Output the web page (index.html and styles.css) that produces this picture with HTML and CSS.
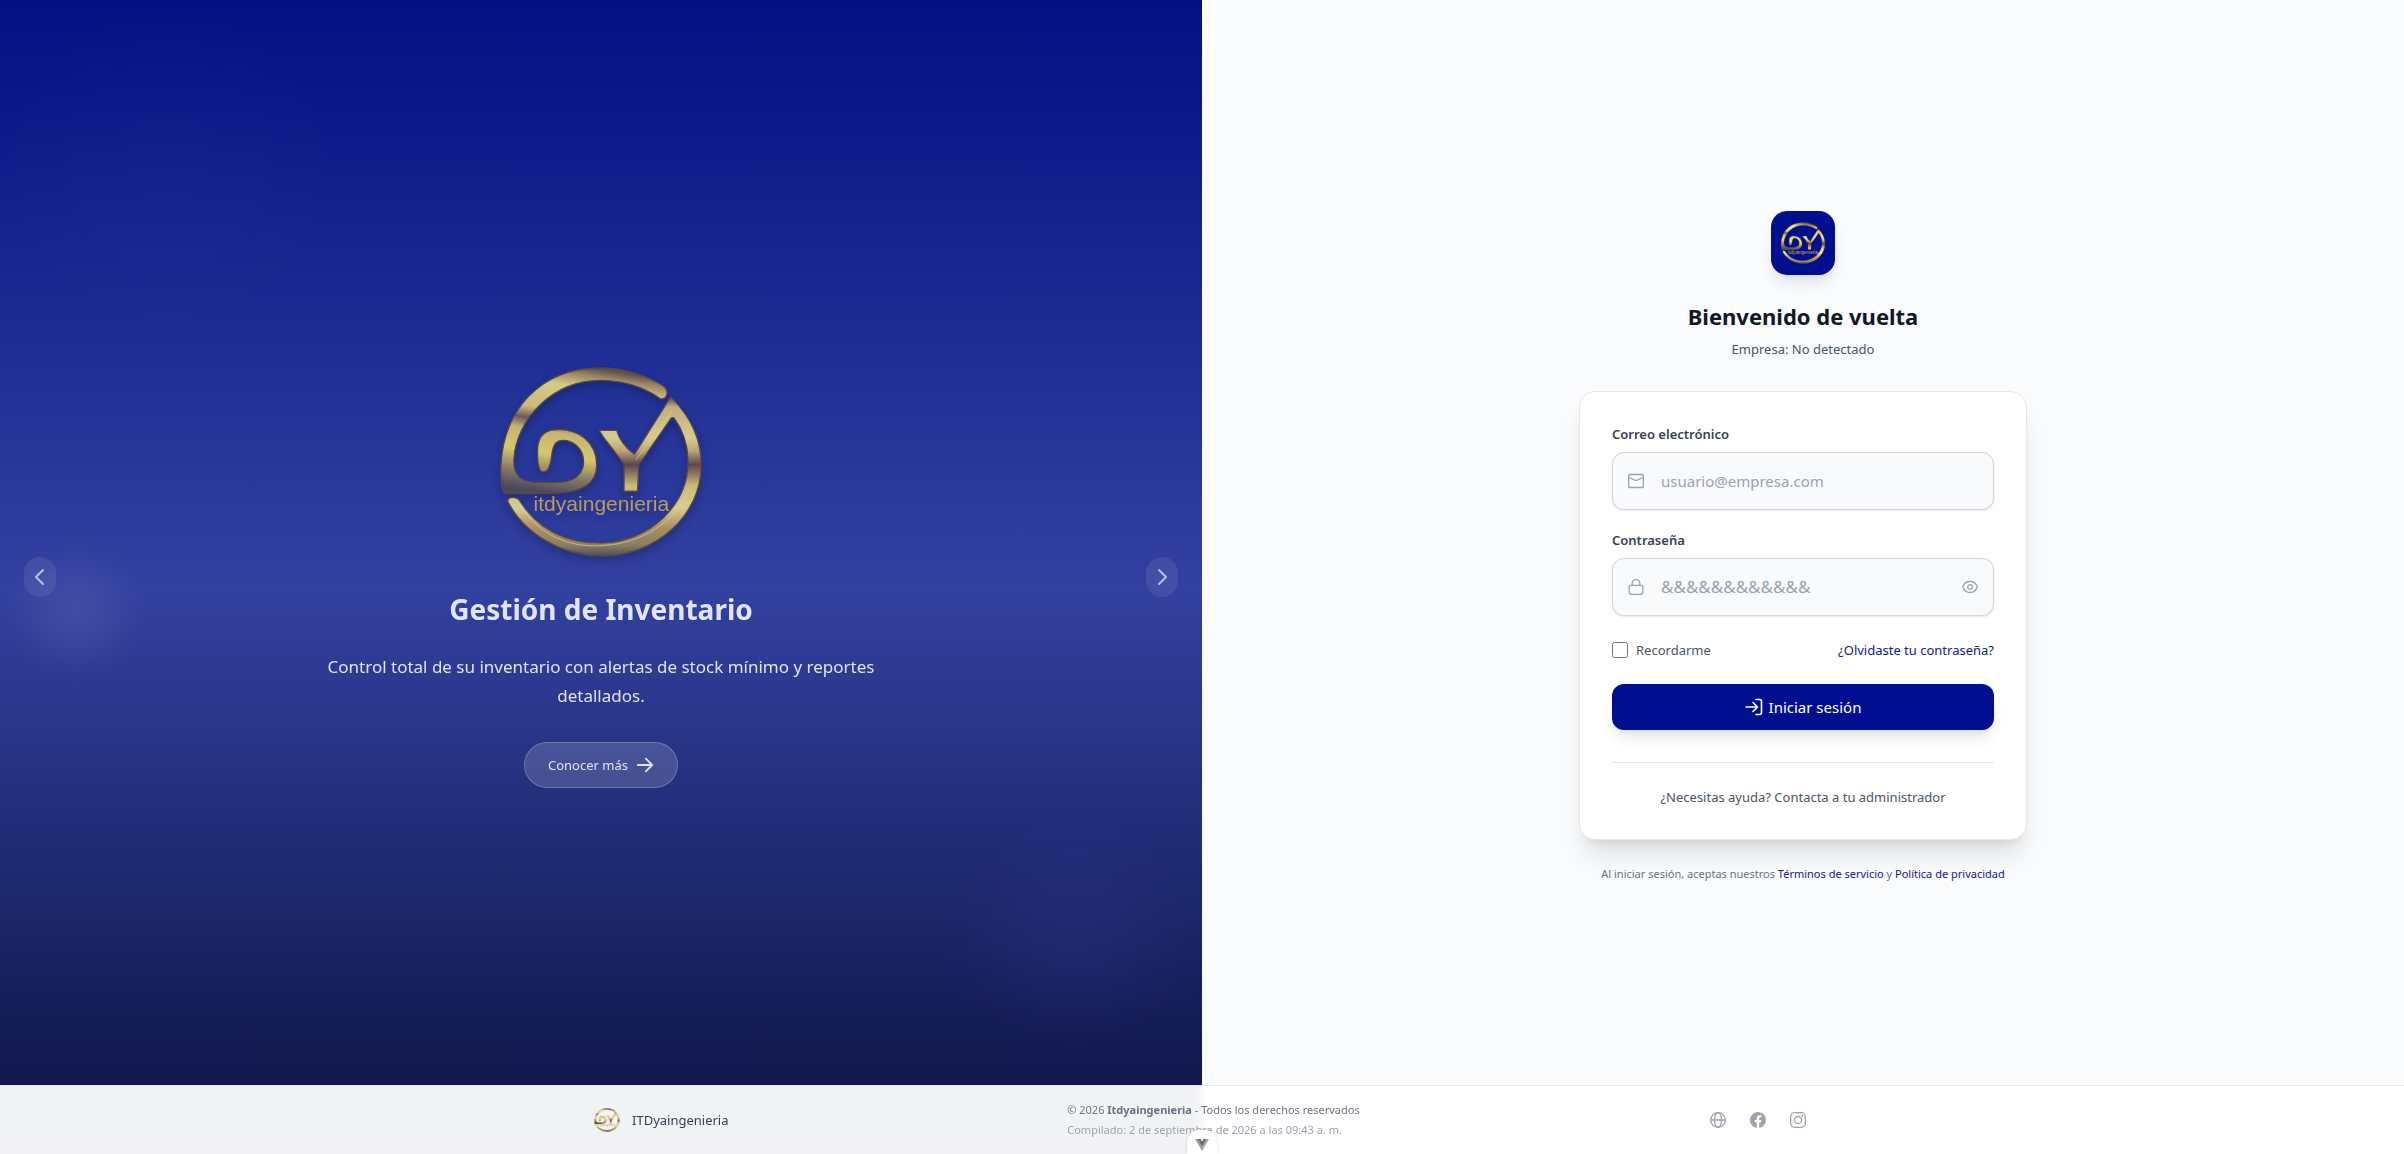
FILE: index.html
```html
<!DOCTYPE html>
<html lang="es">
<head>
  <meta charset="UTF-8">
  <meta name="viewport" content="width=device-width, initial-scale=1.0">
  <title>Iniciar sesión - ITDyaingenieria</title>
  <link rel="stylesheet" href="styles.css">
</head>
<body>
  <main class="login-page">
    <section class="hero">
      <div class="blob blob-top"></div>
      <div class="blob blob-left"></div>
      <div class="blob blob-bottom"></div>

      <button type="button" class="arrow" aria-label="Anterior">
        <svg viewBox="0 0 24 24"><path d="M15 19l-7-7 7-7"/></svg>
      </button>

      <div class="slide">
        <svg class="slide-logo" viewBox="84 44 622 584" role="img" aria-label="itdyaingenieria">
          <defs>
            <linearGradient id="gold-d" gradientUnits="userSpaceOnUse" x1="330" y1="45" x2="270" y2="435">
              <stop offset="0" stop-color="#6b5840"/>
              <stop offset="0.06" stop-color="#b2945f"/>
              <stop offset="0.16" stop-color="#f2e486"/>
              <stop offset="0.36" stop-color="#e6d27c"/>
              <stop offset="0.45" stop-color="#7a604e"/>
              <stop offset="0.53" stop-color="#e2c868"/>
              <stop offset="0.7" stop-color="#f2e068"/>
              <stop offset="0.86" stop-color="#97845a"/>
              <stop offset="1" stop-color="#544b55"/>
            </linearGradient>
            <linearGradient id="gold-y" gradientUnits="userSpaceOnUse" x1="400" y1="135" x2="400" y2="622">
              <stop offset="0" stop-color="#4e4138"/>
              <stop offset="0.07" stop-color="#dcc07c"/>
              <stop offset="0.26" stop-color="#f2e68c"/>
              <stop offset="0.34" stop-color="#d8b970"/>
              <stop offset="0.43" stop-color="#654844"/>
              <stop offset="0.56" stop-color="#e9ce70"/>
              <stop offset="0.7" stop-color="#f2e690"/>
              <stop offset="0.82" stop-color="#c09d5c"/>
              <stop offset="0.93" stop-color="#9b8a58"/>
              <stop offset="1" stop-color="#5a5050"/>
            </linearGradient>
          </defs>
          <g id="logo">
            <path fill="url(#gold-d)" stroke="#5c4c3e" stroke-width="4" d="M575 143C520 105 460 88 392 88C250 88 136 205 130 330C128 375 150 397 200 398L260 398C310 398 342 375 342 335C342 295 310 270 280 270C250 270 248 292 243 330C238 355 232 368 218 366C205 364 202 340 202 310C200 265 215 240 255 238C330 232 382 280 382 345C382 400 340 430 250 431L110 432C92 432 90 400 90 370C90 180 210 50 390 50C470 50 540 75 585 105C605 122 595 148 575 143Z"/>
            <path fill="url(#gold-y)" stroke="#5c4c3e" stroke-width="4" d="M390 240H443C448 262 470 295 497 312L607 138C670 200 700 270 700 345C700 500 560 622 400 622C270 622 160 550 112 458C108 442 130 440 145 450C200 540 290 585 400 582C540 578 662 470 660 330C658 280 645 240 618 203Q612 198 606 206L510 345L506 425H465V345C430 290 405 270 390 240Z"/>
            <path fill="none" stroke="#f3e9a0" stroke-width="3" stroke-opacity="0.7" d="M150 470C210 560 300 598 400 590C520 584 620 520 664 420M502 328L612 180"/>
            <text class="logo-text" x="190" y="484">itdyaingenieria</text>
          </g>
        </svg>
        <h1>Gestión de Inventario</h1>
        <p>Control total de su inventario con alertas de stock mínimo y reportes detallados.</p>
        <button type="button" class="more-btn">
          Conocer más
          <svg viewBox="0 0 20 20"><path d="M2 10h16M11 3l7 7-7 7"/></svg>
        </button>
      </div>

      <button type="button" class="arrow" aria-label="Siguiente">
        <svg viewBox="0 0 24 24"><path d="M9 5l7 7-7 7"/></svg>
      </button>
    </section>

    <section class="login">
      <div class="login-box">
        <div class="tile">
          <svg viewBox="84 44 622 584"><use href="#logo"/></svg>
        </div>
        <h2>Bienvenido de vuelta</h2>
        <p class="company">Empresa: No detectado</p>

        <div class="card">
          <form>
            <label for="email">Correo electrónico</label>
            <div class="field">
              <svg viewBox="0 0 16 16"><rect x="0.7" y="1.5" width="14.600" height="13" rx="1"/><path d="M1 4.500l5.800 2.700a3 3 0 0 0 2.400 0L15 4.500"/></svg>
              <input type="email" id="email" placeholder="usuario@empresa.com">
            </div>

            <label for="password">Contraseña</label>
            <div class="field">
              <svg viewBox="0 0 16 16"><rect x="1.200" y="6.300" width="13.600" height="9" rx="2"/><path d="M4.200 6.300V4a3.800 3.400 0 0 1 7.600 0v2.300"/></svg>
              <input type="password" id="password" placeholder="&amp;&amp;&amp;&amp;&amp;&amp;&amp;&amp;&amp;&amp;&amp;&amp;">
              <button type="button" class="eye-btn" aria-label="Mostrar contraseña">
                <svg viewBox="0 0 16 16"><path d="M0.700 8C2 4.500 4.700 2.500 8 2.500s6 2 7.300 5.500c-1.300 3.500-4 5.500-7.300 5.500S2 11.500 0.700 8z"/><circle cx="8" cy="8" r="2.300"/></svg>
              </button>
            </div>

            <div class="options">
              <label for="remember"><input type="checkbox" id="remember"> Recordarme</label>
              <a href="#">¿Olvidaste tu contraseña?</a>
            </div>

            <button type="submit" class="submit-btn">
              <svg viewBox="0 0 18 18"><path d="M1 9h11M8 4.500L12.500 9 8 13.500M11 1.500h3.500a2 2 0 0 1 2 2v11a2 2 0 0 1-2 2H11"/></svg>
              Iniciar sesión
            </button>
          </form>
          <p class="help">¿Necesitas ayuda? Contacta a tu administrador</p>
        </div>

        <p class="terms">Al iniciar sesión, aceptas nuestros <a href="#">Términos de servicio</a> y <a href="#">Política de privacidad</a></p>
      </div>
    </section>
  </main>

  <footer class="footer">
    <div class="footer-inner">
      <div class="brand">
        <svg viewBox="84 44 622 584"><use href="#logo"/></svg>
        <span>ITDyaingenieria</span>
      </div>
      <div class="copy">
        <p>© 2026 <strong>Itdyaingenieria</strong> - Todos los derechos reservados</p>
        <p class="build">Compilado: 2 de septiembre de 2026 a las 09:43 a. m.</p>
      </div>
      <div class="social">
        <a href="#" aria-label="Sitio web">
          <svg viewBox="0 0 16 16"><circle cx="8" cy="8" r="7.300"/><ellipse cx="8" cy="8" rx="3.500" ry="7.300"/><path d="M1 8h14"/></svg>
        </a>
        <a href="#" aria-label="Facebook">
          <svg class="solid" viewBox="0 0 24 24"><path d="M24 12a12 12 0 1 0-13.900 11.900v-8.400h-3V12h3V9.400c0-3 1.800-4.700 4.500-4.700 1.300 0 2.700.2 2.700.2v3h-1.500c-1.500 0-2 .9-2 1.900V12h3.400l-.5 3.500h-2.900v8.400A12 12 0 0 0 24 12z"/></svg>
        </a>
        <a href="#" aria-label="Instagram">
          <svg viewBox="0 0 16 16"><rect x="0.700" y="0.700" width="14.600" height="14.600" rx="4"/><circle cx="8" cy="8" r="3.500"/><circle cx="12.200" cy="3.800" r="0.400"/></svg>
        </a>
      </div>
    </div>
  </footer>

  <button type="button" class="devtools" aria-label="Vue DevTools">
    <svg viewBox="0 0 14 12"><path fill="#a3a3a3" d="M0 0h5.400L7 2.700 8.600 0H14L7 12z"/><path fill="#6a6a6a" d="M2.800 0h2.600L7 2.700 8.600 0h2.600L7 7.200z"/></svg>
  </button>
</body>
</html>
```

FILE: styles.css
```css
* {
  margin: 0;
  padding: 0;
  box-sizing: border-box;
}

body {
  font-family: 'Noto Sans', sans-serif;
  font-size: 13px;
  line-height: 20px;
  color: #4b5563;
  background: #f9fbfd;
}

button,
input {
  font-family: inherit;
}

button {
  border: none;
  cursor: pointer;
}

a {
  color: #14208f;
  text-decoration: none;
}

svg {
  display: block;
  flex-shrink: 0;
  fill: none;
  stroke: currentColor;
  stroke-linecap: round;
  stroke-linejoin: round;
}

.logo-text {
  font-family: 'Liberation Sans', Arial, sans-serif;
  font-size: 64px;
  fill: #d4a850;
  stroke: none;
}

.login-page {
  display: grid;
  grid-template-columns: 1fr 1fr;
  min-height: 100vh;
}

/* Panel izquierdo */
.hero {
  position: relative;
  overflow: hidden;
  display: flex;
  align-items: center;
  justify-content: space-between;
  padding: 0 24px;
  color: #fff;
  background: linear-gradient(180deg, #021082 0%, #3241a0 51%, #0c1240 100%);
}

.blob {
  position: absolute;
  border-radius: 50%;
  background: #fff;
}

.blob-top {
  top: 40px;
  left: 40px;
  width: 256px;
  height: 256px;
  opacity: 0.01;
  filter: blur(64px);
}

.blob-left {
  top: 568px;
  left: 32px;
  width: 88px;
  height: 88px;
  opacity: 0.07;
  filter: blur(20px);
}

.blob-bottom {
  right: 48px;
  bottom: 144px;
  width: 160px;
  height: 160px;
  background: #6366f1;
  opacity: 0.08;
  filter: blur(40px);
}

.arrow {
  position: relative;
  display: flex;
  align-items: center;
  justify-content: center;
  width: 32px;
  height: 40px;
  border-radius: 16px;
  color: #b9c1ea;
  background: rgba(255, 255, 255, 0.08);
}

.arrow svg {
  width: 24px;
  height: 24px;
  stroke-width: 2;
}

.slide {
  display: flex;
  flex-direction: column;
  align-items: center;
  max-width: 576px;
  text-align: center;
  opacity: 0.86;
}

.slide-logo {
  width: 206px;
  height: 192px;
  margin-bottom: 32px;
  filter: drop-shadow(0 4px 4px rgba(0, 0, 0, 0.25));
}

.slide h1 {
  font-size: 28px;
  line-height: 38px;
  margin-bottom: 24px;
}

.slide p {
  font-size: 17px;
  line-height: 29px;
  margin-bottom: 32px;
}

.more-btn {
  display: flex;
  align-items: center;
  gap: 8px;
  height: 46px;
  padding: 0 23px;
  border: 1px solid rgba(255, 255, 255, 0.25);
  border-radius: 23px;
  font-size: 13px;
  color: #fff;
  background: rgba(255, 255, 255, 0.18);
}

.more-btn svg {
  width: 18px;
  height: 18px;
  stroke-width: 2;
}

/* Panel derecho */
.login {
  display: flex;
  align-items: center;
  justify-content: center;
  padding: 0 24px 60px;
}

.login-box {
  width: 100%;
  max-width: 448px;
  text-align: center;
}

.tile {
  display: flex;
  align-items: center;
  justify-content: center;
  width: 64px;
  height: 64px;
  margin: 0 auto 24px;
  border-radius: 16px;
  background: #000f8f;
  box-shadow: 0 10px 15px -3px rgba(0, 0, 0, 0.1), 0 4px 6px -4px rgba(0, 0, 0, 0.1);
}

.tile svg {
  width: 46px;
  height: 42px;
}

h2 {
  font-size: 22px;
  line-height: 34px;
  margin-bottom: 6px;
  color: #111827;
}

.company {
  margin-bottom: 32px;
}

.card {
  padding: 32px;
  border: 1px solid #e5e7eb;
  border-radius: 16px;
  background: #fff;
  box-shadow: 0 20px 25px -5px rgba(0, 0, 0, 0.1), 0 8px 10px -6px rgba(0, 0, 0, 0.1);
}

form {
  text-align: left;
}

label {
  display: block;
  margin-bottom: 8px;
  font-weight: 600;
  color: #374151;
}

.field {
  display: flex;
  align-items: center;
  gap: 17px;
  height: 58px;
  padding: 0 15px;
  margin-bottom: 20px;
  border: 1px solid #d1d5db;
  border-radius: 12px;
  color: #9ca3af;
  background: #f9fafc;
  box-shadow: 0 1px 2px rgba(0, 0, 0, 0.1);
}

.field svg {
  width: 16px;
  height: 16px;
  stroke-width: 1.3;
}

.field input {
  flex: 1;
  min-width: 0;
  height: 24px;
  border: none;
  outline: none;
  font-size: 15px;
  color: #111827;
  background: transparent;
}

.field input::placeholder {
  color: #9ca3af;
}

.field input[type="password"] {
  font-size: 17px;
}

.eye-btn {
  color: #9ca3af;
  background: none;
}

.options {
  display: flex;
  align-items: center;
  justify-content: space-between;
  margin: 24px 0;
}

.options label {
  display: flex;
  align-items: center;
  gap: 8px;
  margin: 0;
  font-weight: 400;
  color: #4b5563;
}

.options input {
  width: 16px;
  height: 16px;
}

.submit-btn {
  display: flex;
  align-items: center;
  justify-content: center;
  gap: 6px;
  width: 100%;
  height: 46px;
  border-radius: 12px;
  font-size: 15px;
  color: #fff;
  background: #000f8f;
  box-shadow: 0 10px 15px -3px rgba(0, 0, 0, 0.1), 0 4px 6px -4px rgba(0, 0, 0, 0.1);
}

.submit-btn svg {
  width: 18px;
  height: 18px;
  stroke-width: 1.6;
}

.help {
  margin-top: 32px;
  padding-top: 24px;
  border-top: 1px solid #e5e7eb;
}

.terms {
  margin-top: 24px;
  font-size: 11px;
  line-height: 20px;
  color: #6b7280;
}

/* Pie de página */
.footer {
  position: fixed;
  left: 0;
  right: 0;
  bottom: 0;
  padding: 16px 0;
  border-top: 1px solid #e5e7eb;
  background: rgba(255, 255, 255, 0.95);
  backdrop-filter: blur(4px);
}

.footer-inner {
  display: flex;
  align-items: center;
  justify-content: space-between;
  max-width: 1280px;
  margin: 0 auto;
  padding: 0 36px 0 32px;
}

.brand {
  display: flex;
  align-items: center;
  gap: 12px;
  color: #374151;
}

.brand svg {
  width: 26px;
  height: 24px;
}

.copy {
  min-width: 304px;
  font-size: 11px;
  line-height: 16px;
  color: #6b7280;
}

.build {
  margin-top: 4px;
  color: #9ca3af;
}

.social {
  display: flex;
  gap: 24px;
}

.social a {
  color: #9ca3af;
}

.social svg {
  width: 16px;
  height: 16px;
  stroke-width: 1.3;
}

.social .solid {
  fill: currentColor;
  stroke: none;
}

.devtools {
  position: fixed;
  left: 50%;
  bottom: 0;
  display: flex;
  justify-content: center;
  width: 30px;
  height: 24px;
  margin-left: -15px;
  padding-top: 9px;
  border-radius: 12px 12px 0 0;
  background: #fff;
  box-shadow: 0 0 3px rgba(0, 0, 0, 0.15);
}

.devtools svg {
  width: 14px;
  height: 12px;
  stroke: none;
}
```
